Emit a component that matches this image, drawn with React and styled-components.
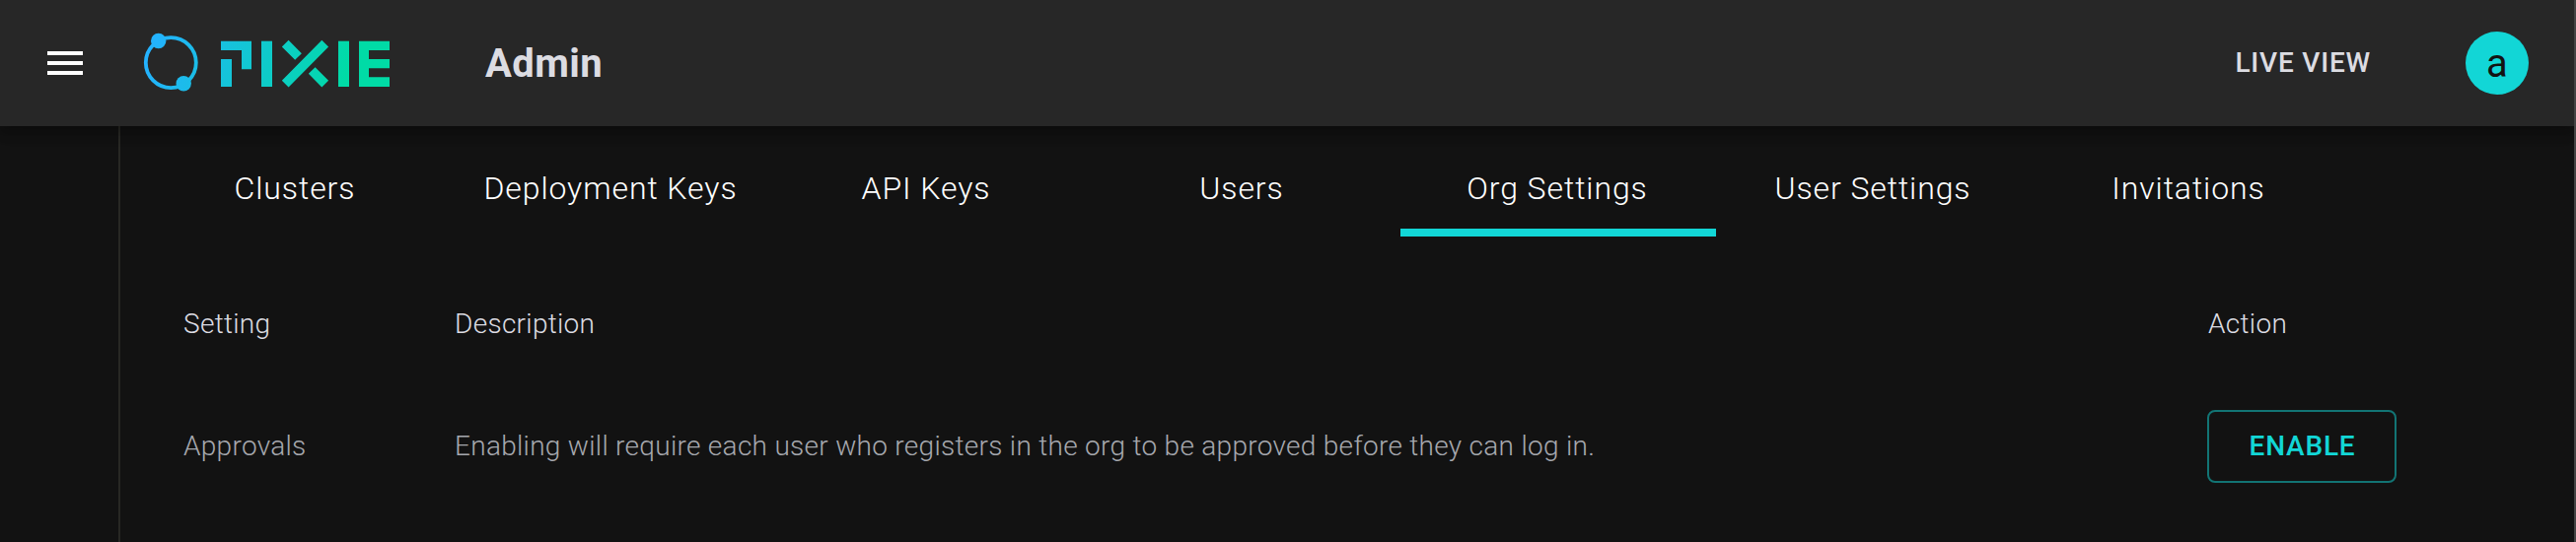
import React from 'react';
import styled, { createGlobalStyle } from 'styled-components';

const GlobalStyle = createGlobalStyle`
  * { box-sizing: border-box; }
  body {
    margin: 0;
    background: #121212;
    font-family: Roboto, "Liberation Sans", sans-serif;
    -webkit-font-smoothing: antialiased;
  }
`;

const Page = styled.div`
  display: flex;
  flex-direction: column;
  height: 550px;
  overflow: hidden;
  background: #121212;
  border-right: 2px solid #444444;
`;

const Header = styled.header`
  display: flex;
  align-items: center;
  flex: 0 0 128px;
  padding: 0 46px 0 48px;
  background: #272727;
  box-shadow: 0 4px 8px -2px rgba(0, 0, 0, 0.2), 0 8px 10px rgba(0, 0, 0, 0.14), 0 2px 20px rgba(0, 0, 0, 0.12);
  z-index: 1;
`;

const MenuButton = styled.button`
  display: flex;
  padding: 0;
  border: 0;
  background: none;
`;

const Logo = styled.svg`
  display: block;
  margin-left: 60px;
`;

const Title = styled.h1`
  flex: 1;
  margin: 0 0 0 96px;
  padding-top: 2px;
  color: #dcdce2;
  font-size: 40px;
  font-weight: 700;
  line-height: 48px;
  letter-spacing: 0.4px;
`;

const LiveView = styled.a`
  color: #dcdce2;
  font-size: 28px;
  font-weight: 500;
  line-height: 48px;
  letter-spacing: 0.8px;
  margin-right: 96px;
`;

const Avatar = styled.div`
  display: flex;
  align-items: center;
  justify-content: center;
  width: 64px;
  height: 64px;
  padding-top: 2px;
  border-radius: 50%;
  background: #12d6d6;
  color: #121212;
  font-size: 40px;
  line-height: 62px;
`;

const Body = styled.div`
  display: flex;
  flex: 1;
`;

const Sidebar = styled.aside`
  flex: 0 0 122px;
  border-right: 2px solid #282824;
`;

const Content = styled.main`
  flex: 1;
  padding: 16px 0 0 18px;
`;

const Tabs = styled.nav`
  display: flex;
`;

const Tab = styled.div`
  width: 320px;
  height: 96px;
  padding: 23px 2px 0 0;
  border-bottom: 8px solid ${(p) => (p.$active ? '#12d6d6' : 'transparent')};
  color: #ffffff;
  font-size: 32px;
  font-weight: 300;
  line-height: 48px;
  letter-spacing: 0.9px;
  text-align: center;
`;

const Table = styled.div`
  margin: 27px 0 0 46px;
`;

const Row = styled.div`
  display: grid;
  grid-template-columns: 275px 1777px 192px;
  align-items: center;
  height: 124px;
  color: ${(p) => (p.$head ? '#dcdce2' : '#a6a8ae')};
  font-size: 28px;
  font-weight: 300;
  line-height: 40px;
  letter-spacing: 0.29px;
`;

const ActionHeading = styled.span`
  padding-left: 1px;
`;

const Enable = styled.button`
  width: 192px;
  height: 74px;
  padding: 0 0 0 1px;
  border: 2px solid #127474;
  border-radius: 8px;
  background: none;
  color: #12d6d6;
  font-family: inherit;
  font-size: 28px;
  font-weight: 500;
  line-height: 48px;
  letter-spacing: 0.8px;
`;

const TABS = ['Clusters', 'Deployment Keys', 'API Keys', 'Users', 'Org Settings', 'User Settings', 'Invitations'];

function PixieLogo() {
  return (
    <Logo width="252" height="64" viewBox="144 32 252 64" aria-label="Pixie">
      <defs>
        <linearGradient id="brand" gradientUnits="userSpaceOnUse" x1="155" y1="35" x2="345" y2="95">
          <stop offset="0" stopColor="#24b2ff" />
          <stop offset="1" stopColor="#00dba6" />
        </linearGradient>
      </defs>
      <circle cx="173.3" cy="63.6" r="25.5" fill="none" stroke="url(#brand)" strokeWidth="3.8" />
      <g fill="url(#brand)">
        <circle cx="160.7" cy="41.5" r="7.7" />
        <circle cx="186.2" cy="84.7" r="7.7" />
        <path d="M224 41.7h31v28.6h-10V51h-21z" />
        <rect x="224" y="60" width="11" height="28" />
        <rect x="265" y="41.7" width="11" height="46.3" />
        <rect x="343" y="41.7" width="11" height="46.3" />
        <path d="M364 41.7h31V51h-21v9h21v9.3h-21v9h21V88h-31z" />
      </g>
      <g stroke="url(#brand)" strokeWidth="9.5" fill="none">
        <path d="M289.2 85.2L329.7 44.2M289.2 44.2L302.5 57.5M316.2 71.5L329.7 85.2" />
      </g>
    </Logo>
  );
}

export default function App() {
  return (
    <>
      <GlobalStyle />
      <Page>
        <Header>
          <MenuButton aria-label="Menu">
            <svg width="36" height="24" fill="#ffffff">
              <path d="M0 0h36v4H0zM0 10h36v4H0zM0 20h36v4H0z" />
            </svg>
          </MenuButton>
          <PixieLogo />
          <Title>Admin</Title>
          <LiveView>LIVE VIEW</LiveView>
          <Avatar>a</Avatar>
        </Header>
        <Body>
          <Sidebar />
          <Content>
            <Tabs>
              {TABS.map((t) => (
                <Tab key={t} $active={t === 'Org Settings'}>{t}</Tab>
              ))}
            </Tabs>
            <Table>
              <Row $head>
                <span>Setting</span>
                <span>Description</span>
                <ActionHeading>Action</ActionHeading>
              </Row>
              <Row>
                <span>Approvals</span>
                <span>Enabling will require each user who registers in the org to be approved before they can log in.</span>
                <Enable>ENABLE</Enable>
              </Row>
            </Table>
          </Content>
        </Body>
      </Page>
    </>
  );
}
